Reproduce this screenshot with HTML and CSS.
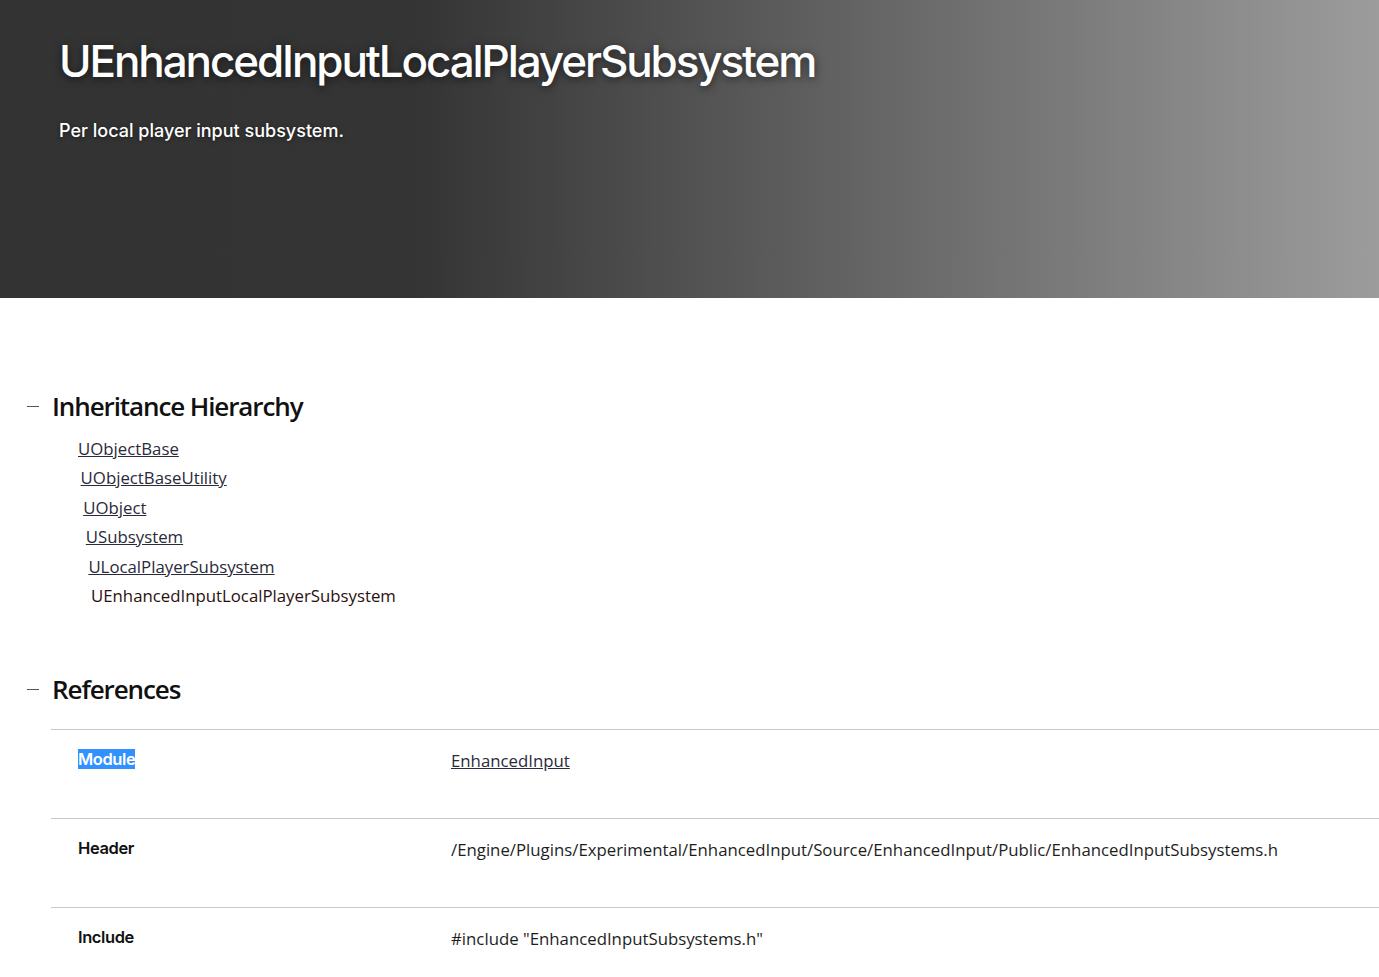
FILE: index.html
```html
<!DOCTYPE html>
<html lang="en">
<head>
<meta charset="utf-8">
<title>UEnhancedInputLocalPlayerSubsystem</title>
<link rel="stylesheet" href="styles.css">
</head>
<body>
<header class="hero">
  <h1 class="hero-title">UEnhancedInputLocalPlayerSubsystem</h1>
  <p class="hero-desc">Per local player input subsystem.</p>
</header>
<main class="content">
  <section class="section section-hierarchy">
    <div class="section-head">
      <span class="toggle"></span>
      <h2 class="section-title">Inheritance Hierarchy</h2>
    </div>
    <ul class="hierarchy">
      <li class="h-item lvl0"><a href="#">UObjectBase</a></li>
      <li class="h-item lvl1"><a href="#">UObjectBaseUtility</a></li>
      <li class="h-item lvl2"><a href="#">UObject</a></li>
      <li class="h-item lvl3"><a href="#">USubsystem</a></li>
      <li class="h-item lvl4"><a href="#">ULocalPlayerSubsystem</a></li>
      <li class="h-item lvl5 current">UEnhancedInputLocalPlayerSubsystem</li>
    </ul>
  </section>
  <section class="section section-refs">
    <div class="section-head">
      <span class="toggle"></span>
      <h2 class="section-title">References</h2>
    </div>
    <div class="ref-table">
      <div class="ref-row">
        <div class="ref-label"><span class="selected">Module</span></div>
        <div class="ref-value"><a href="#">EnhancedInput</a></div>
      </div>
      <div class="ref-row">
        <div class="ref-label">Header</div>
        <div class="ref-value">/Engine/Plugins/Experimental/EnhancedInput/Source/EnhancedInput/Public/EnhancedInputSubsystems.h</div>
      </div>
      <div class="ref-row">
        <div class="ref-label">Include</div>
        <div class="ref-value">#include "EnhancedInputSubsystems.h"</div>
      </div>
    </div>
  </section>
</main>
</body>
</html>
```

FILE: styles.css
```css
html, body {
  margin: 0;
  padding: 0;
  background: #ffffff;
}

body {
  font-family: "Open Sans", "Noto Sans", sans-serif;
  color: #1a1a1a;
  overflow: hidden;
}

.hero {
  height: 298px;
  box-sizing: border-box;
  padding: 33px 59px 0;
  background: linear-gradient(90deg, #333333 0%, #343434 30%, #9c9c9c 100%);
  color: #ffffff;
}

.hero-title {
  margin: 0;
  font-family: "Inter", "Liberation Sans", sans-serif;
  font-weight: 500;
  font-size: 44px;
  line-height: 56px;
  letter-spacing: -2.1px;
  text-shadow: 0 2px 8px rgba(0, 0, 0, 0.6);
}

.hero-desc {
  margin: 30px 0 0;
  font-family: "Inter", "Liberation Sans", sans-serif;
  font-size: 18px;
  line-height: 24px;
  font-weight: 500;
  letter-spacing: 0;
  text-shadow: 0 1px 4px rgba(0, 0, 0, 0.5);
}

.content {
  padding: 88px 0 0 27px;
}

.section-head {
  display: flex;
  align-items: center;
  height: 40px;
}

.toggle {
  display: block;
  width: 12px;
  height: 1px;
  background: #555555;
  margin-right: 13px;
}

.section-title {
  margin: 0;
  font-family: "Open Sans", sans-serif;
  font-weight: 600;
  font-size: 26px;
  line-height: 40px;
  letter-spacing: -1.1px;
  color: #111111;
}

.hierarchy {
  list-style: none;
  margin: 8px 0 0;
  padding: 0 0 0 51px;
}

.h-item {
  font-size: 16.8px;
  line-height: 29.4px;
  color: #1e1e1e;
}

.h-item a {
  color: #2a2a3a;
  text-decoration: underline;
}

.lvl1 { padding-left: 2.6px; }
.lvl2 { padding-left: 5.2px; }
.lvl3 { padding-left: 7.8px; }
.lvl4 { padding-left: 10.4px; }
.lvl5 { padding-left: 13px; }

.current { color: #2a1010; }

.section-refs {
  margin-top: 59px;
}

.ref-table {
  margin: 20px 0 0 24px;
}

.ref-row {
  display: flex;
  border-top: 1px solid #c8c8c8;
  height: 88px;
  box-sizing: content-box;
}

.ref-label {
  width: 400px;
  box-sizing: border-box;
  padding: 17px 0 0 27px;
  font-family: "Inter", "Liberation Sans", sans-serif;
  font-weight: 600;
  font-size: 16.5px;
  line-height: 24px;
  letter-spacing: -0.4px;
  color: #111111;
}

.selected {
  background: #3390ff;
  color: #ffffff;
}

.ref-value {
  padding-top: 19px;
  font-size: 16.8px;
  line-height: 24px;
  color: #1e1e1e;
}

.ref-value a {
  color: #2a2a3a;
  text-decoration: underline;
}
```
